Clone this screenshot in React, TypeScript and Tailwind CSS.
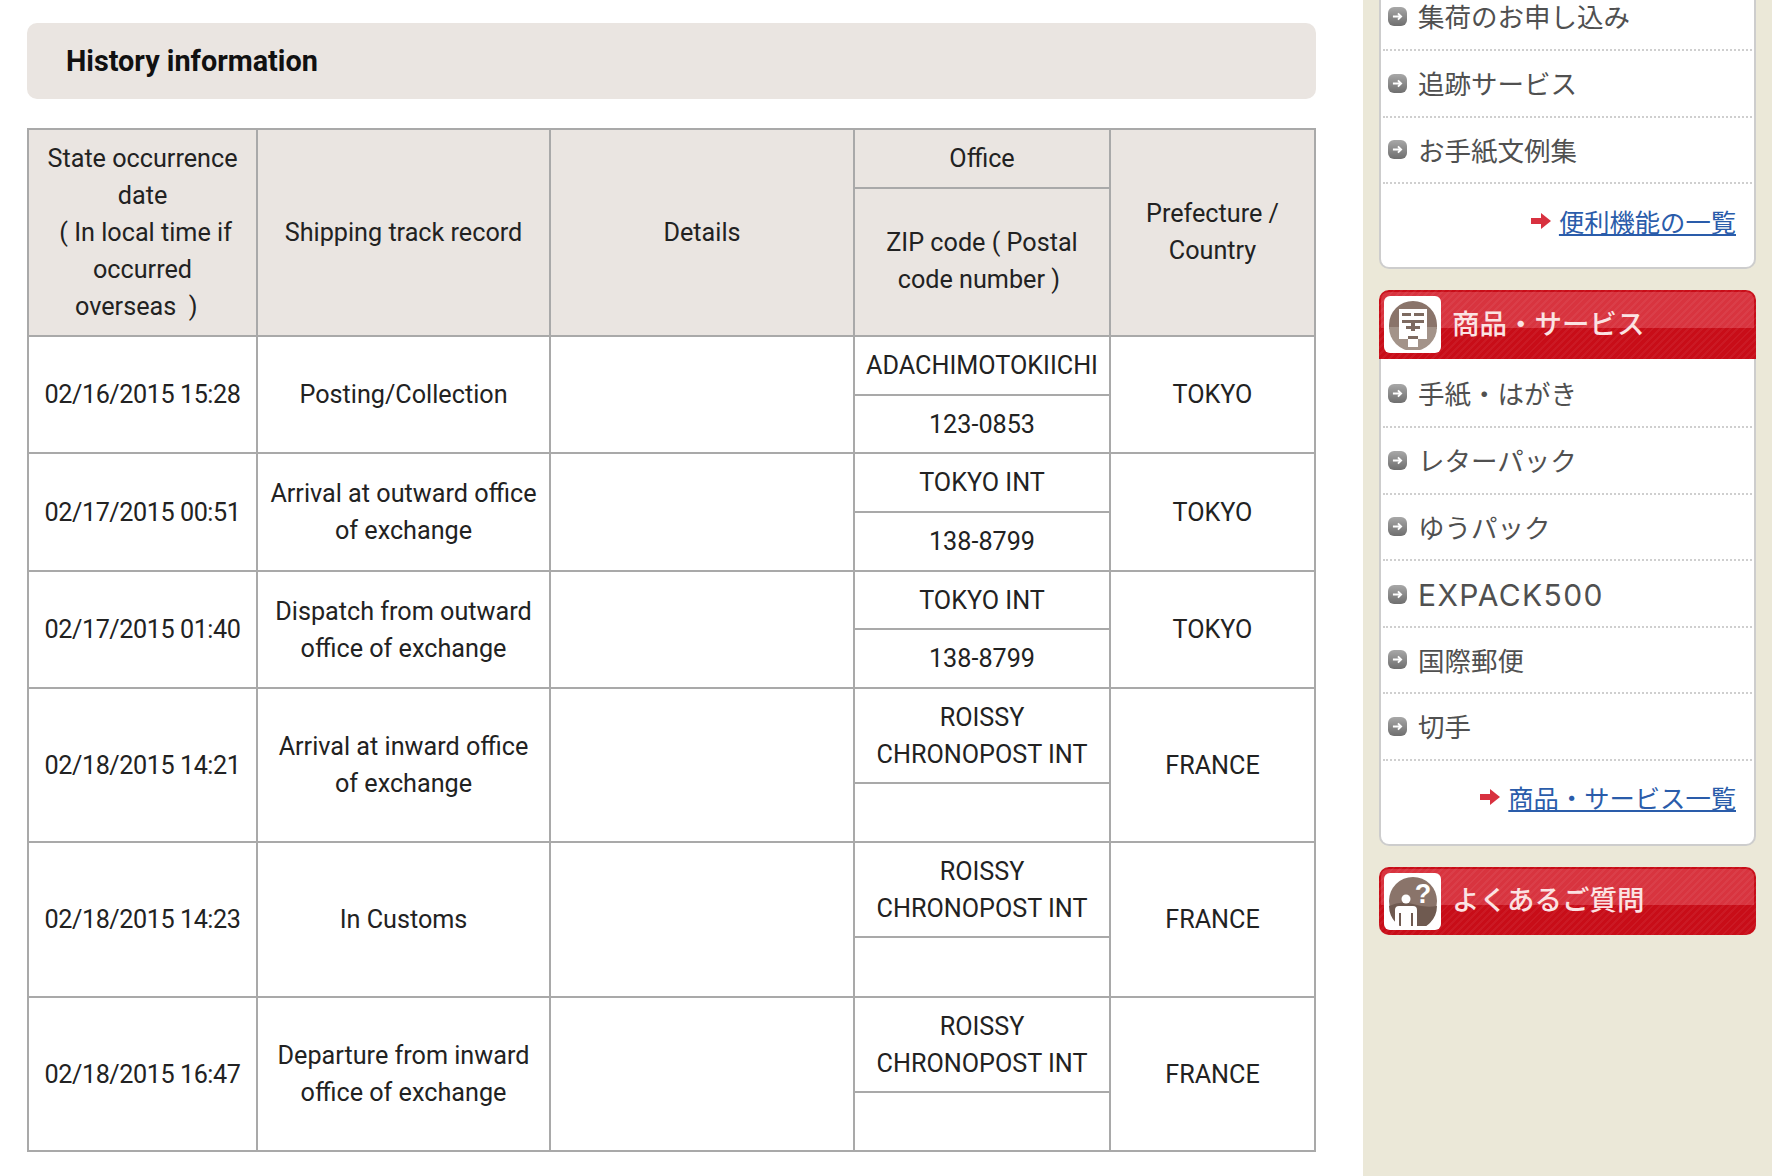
import type { ReactNode } from "react"

const rows = [
  { date: "02/16/2015 15:28", record: "Posting/Collection", office: "ADACHIMOTOKIICHI", zip: "123-0853", place: "TOKYO", top: "h-[59px]", bottom: "h-[58px]" },
  { date: "02/17/2015 00:51", record: "Arrival at outward office of exchange", office: "TOKYO INT", zip: "138-8799", place: "TOKYO", top: "h-[59px]", bottom: "h-[59px]" },
  { date: "02/17/2015 01:40", record: "Dispatch from outward office of exchange", office: "TOKYO INT", zip: "138-8799", place: "TOKYO", top: "h-[58px]", bottom: "h-[59px]" },
  { date: "02/18/2015 14:21", record: "Arrival at inward office of exchange", office: "ROISSY CHRONOPOST INT", zip: "", place: "FRANCE", top: "h-[95px]", bottom: "h-[59px]" },
  { date: "02/18/2015 14:23", record: "In Customs", office: "ROISSY CHRONOPOST INT", zip: "", place: "FRANCE", top: "h-[95px]", bottom: "h-[60px]" },
  { date: "02/18/2015 16:47", record: "Departure from inward office of exchange", office: "ROISSY CHRONOPOST INT", zip: "", place: "FRANCE", top: "h-[95px]", bottom: "h-[59px]" },
]

const cell = "border-2 border-[#a9a9a9] px-2 py-0 text-center align-middle font-normal"
const head = cell + " bg-[#eae5e1]"

function Bullet() {
  return (
    <span className="flex h-[19px] w-[19px] shrink-0 items-center justify-center rounded-[6px] bg-gradient-to-b from-[#a8a8a8] to-[#6f6f6f]">
      <svg width="11" height="11" viewBox="0 0 12 12" fill="none" stroke="#fff" strokeWidth="2">
        <path d="M1 6h9M6.5 2.5 10 6l-3.5 3.5" />
      </svg>
    </span>
  )
}

function MenuItem({ label, className = "h-[66.5px]", textClass = "text-[26.5px]" }: { label: string; className?: string; textClass?: string }) {
  return (
    <div className={"mx-[2px] flex items-center gap-[11px] border-b-2 border-dotted border-[#cfcfcf] pl-[5px] " + className}>
      <Bullet />
      <span className={"leading-none text-[#505050] " + textClass}>{label}</span>
    </div>
  )
}

function MoreLink({ label, className }: { label: string; className: string }) {
  return (
    <div className={"flex items-center justify-end gap-2 pr-[18px] " + className}>
      <svg width="20" height="18" viewBox="0 0 20 18" fill="#d8313f">
        <path d="M0 6h10V1l10 8-10 8v-5H0z" />
      </svg>
      <a className="text-[25.3px] leading-[30px] text-[#2a5caa] underline">{label}</a>
    </div>
  )
}

function RedBar({ icon, label, className }: { icon: ReactNode; label: string; className: string }) {
  return (
    <div className={"relative flex items-center overflow-hidden bg-[#c80d18] pl-[5px] " + className}>
      <div className="absolute inset-x-[2px] top-[2px] h-[36px] rounded-t-[8px] bg-[#d8343f]" />
      <div className="absolute inset-0 bg-[repeating-linear-gradient(135deg,rgba(255,255,255,0.05)_0px,rgba(255,255,255,0.05)_2px,transparent_2px,transparent_5px)]" />
      <div className="relative flex h-[57px] w-[57px] items-center justify-center rounded-[6px] bg-white">{icon}</div>
      <span className="relative mb-[4px] ml-[11px] text-[27.5px] font-medium leading-none text-[#fbe3e3]">{label}</span>
    </div>
  )
}

function PostIcon() {
  return (
    <svg width="50" height="50" viewBox="0 0 50 50">
      <path d="M25 1a24 24 0 0 0-24 24v4h48v-4A24 24 0 0 0 25 1z" fill="#8a746a" />
      <path d="M1 27a24 24 0 0 0 48 0z" fill="#a39389" />
      <path d="M11 9h28v30H30v8H20v-8h-9z" fill="#fff" />
      <rect x="14" y="13" width="9" height="3" fill="#7d6a60" />
      <rect x="26" y="13" width="10" height="3" fill="#7d6a60" />
      <rect x="14" y="20" width="22" height="3" fill="#7d6a60" />
      <rect x="23" y="20" width="4" height="11" fill="#7d6a60" />
      <rect x="18" y="26" width="14" height="3" fill="#7d6a60" />
      <rect x="20" y="36" width="10" height="3" fill="#7d6a60" />
    </svg>
  )
}

function FaqIcon() {
  return (
    <svg width="50" height="50" viewBox="0 0 50 50">
      <circle cx="25" cy="25" r="24" fill="#8a746a" />
      <path d="M1 30a24 24 0 0 0 48 0q-12 2-24-2T1 30z" fill="#6f5a50" />
      <circle cx="18" cy="23" r="4.5" fill="#fff" />
      <path d="M7 50V34q0-4 4-4h14q4 0 4 4v16h-4V37h-2v13H13V37h-2v13z" fill="#fff" />
      <text x="35" y="27" textAnchor="middle" fontSize="27" fontWeight="700" fill="#fff" fontFamily="Liberation Sans, sans-serif">?</text>
    </svg>
  )
}

export default function App() {
  return (
    <div className="flex h-[1176px] overflow-hidden bg-white font-[Roboto,sans-serif] text-[25.2px] leading-[37px] text-[#222]">
      <main className="w-[1363px] shrink-0 pl-[27px] pr-[47px] pt-[23px]">
        <div className="flex h-[76px] items-center rounded-[10px] bg-[#eae5e1] pl-[39px]">
          <h2 className="text-[28.8px] font-bold text-[#111]">History information</h2>
        </div>

        <table className="mt-[29px] w-[1289px] table-fixed border-collapse border-2 border-[#a9a9a9]">
          <colgroup>
            <col className="w-[229px]" />
            <col className="w-[293px]" />
            <col className="w-[304px]" />
            <col className="w-[256px]" />
            <col className="w-[205px]" />
          </colgroup>
          <thead>
            <tr className="h-[59px]">
              <th rowSpan={2} className={head}>
                State occurrence date<br />
                &nbsp;( In local time if<br />
                occurred<br />
                overseas&nbsp;&nbsp;)&nbsp;&nbsp;
              </th>
              <th rowSpan={2} className={head}>Shipping track record</th>
              <th rowSpan={2} className={head}>Details</th>
              <th className={head}>Office</th>
              <th rowSpan={2} className={`${head} pb-[2px]`}>Prefecture / Country</th>
            </tr>
            <tr className="h-[148px]">
              <th className={`${head} pb-[2px]`}>ZIP code ( Postal<br />code number )&nbsp;</th>
            </tr>
          </thead>
          <tbody>
            {rows.map((row) => [
              <tr key={row.date} className={row.top}>
                <td rowSpan={2} className={cell + " whitespace-nowrap tracking-[-0.45px]"}>{row.date}</td>
                <td rowSpan={2} className={cell}>{row.record}</td>
                <td rowSpan={2} className={cell}></td>
                <td className={cell}>{row.office}</td>
                <td rowSpan={2} className={cell}>{row.place}</td>
              </tr>,
              <tr key={row.date + "-zip"} className={row.bottom}>
                <td className={cell}>{row.zip}</td>
              </tr>,
            ])}
          </tbody>
        </table>
      </main>

      <aside className="w-[409px] shrink-0 bg-[#ebe8d8] pl-[16px] pr-[16px] font-['Noto_Sans_CJK_JP',sans-serif]">
        <section className="h-[269px] rounded-b-[10px] border-x-2 border-b-2 border-[#cdcdcd] bg-white">
          <MenuItem label="集荷のお申し込み" className="h-[51px] pb-[17px]" />
          <MenuItem label="追跡サービス" />
          <MenuItem label="お手紙文例集" />
          <MoreLink label="便利機能の一覧" className="h-[74px]" />
        </section>

        <section className="mt-[21px]">
          <RedBar icon={<PostIcon />} label="商品・サービス" className="h-[69px] rounded-t-[10px]" />
          <div className="h-[487px] rounded-b-[10px] border-x-2 border-b-2 border-[#cdcdcd] bg-white">
            <MenuItem label="手紙・はがき" className="h-[69px] pt-[2px]" />
            <MenuItem label="レターパック" />
            <MenuItem label="ゆうパック" />
            <MenuItem label="EXPACK500" className="h-[66.5px] pt-[3px]" textClass="font-[Inter,sans-serif] text-[30px] tracking-[1.4px]" />
            <MenuItem label="国際郵便" />
            <MenuItem label="切手" />
            <MoreLink label="商品・サービス一覧" className="h-[72px]" />
          </div>
        </section>

        <section className="mt-[21px]">
          <RedBar icon={<FaqIcon />} label="よくあるご質問" className="h-[68px] rounded-[10px]" />
        </section>
      </aside>
    </div>
  )
}
